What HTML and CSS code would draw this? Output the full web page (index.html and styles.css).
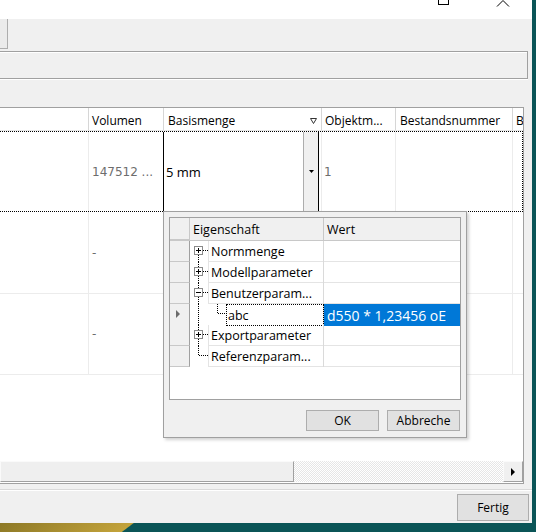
FILE: index.html
```html
<!DOCTYPE html>
<html lang="de">
<head>
    <meta charset="UTF-8">
    <title>Basismenge</title>
    <link rel="stylesheet" href="styles.css">
</head>
<body>
    <div class="window">
        <div class="titlebar">
            <svg class="cap-max" width="22" height="19"><rect x="6.5" y="-6.5" width="10" height="11" fill="none" stroke="#000"/></svg>
            <svg class="cap-close" width="22" height="19"><polyline points="5,6.5 11,0.5 17,6.5" fill="none" stroke="#000"/></svg>
        </div>
        <div class="toolbar"><div class="tool-btn"></div></div>
        <div class="panel"></div>

        <div class="grid-frame">
            <div class="grid-head">
                <div class="hcell c0"></div>
                <div class="hcell c1">Volumen</div>
                <div class="hcell c2">Basismenge
                    <svg class="filter" width="7" height="6"><polygon points="0.5,0.5 6.5,0.5 3.5,5.5" fill="none" stroke="#333"/></svg>
                </div>
                <div class="hcell c3">Objektm...</div>
                <div class="hcell c4">Bestandsnummer</div>
                <div class="hcell c5">B</div>
            </div>
            <div class="row row-focus">
                <div class="cell c0"></div>
                <div class="cell c1 muted">147512 ...</div>
                <div class="cell c2 edit">
                    <div class="editor">
                        <span>5 mm</span>
                        <div class="drop-btn"><svg width="5" height="3"><polygon points="0,0 5,0 2.5,3" fill="#000"/></svg></div>
                    </div>
                </div>
                <div class="cell c3 muted">1</div>
                <div class="cell c4"></div>
                <div class="cell c5"></div>
            </div>
            <div class="row row-b">
                <div class="cell c0"></div>
                <div class="cell c1 muted">-</div>
                <div class="cell c2"></div>
                <div class="cell c3"></div>
                <div class="cell c4"></div>
                <div class="cell c5"></div>
            </div>
            <div class="row row-c">
                <div class="cell c0"></div>
                <div class="cell c1 muted">-</div>
                <div class="cell c2"></div>
                <div class="cell c3"></div>
                <div class="cell c4"></div>
                <div class="cell c5"></div>
            </div>
            <div class="grid-fill"></div>
            <div class="hscroll">
                <div class="thumb"></div>
                <div class="track"></div>
                <div class="arrow"><svg width="4" height="8"><polygon points="0,0 4,4 0,8" fill="#000"/></svg></div>
            </div>
        </div>

        <div class="footer">
            <button class="btn fertig">Fertig</button>
        </div>

        <!-- dropdown of the Basismenge editor -->
        <div class="popup">
            <div class="pg">
                <div class="pg-head">
                    <div class="rh"></div>
                    <div class="ph name-h">Eigenschaft</div>
                    <div class="ph">Wert</div>
                </div>
                <div class="pg-row">
                    <div class="rh"></div>
                    <div class="name">
                        <svg width="18" height="21">
                            <line x1="8.5" y1="14" x2="8.5" y2="21" class="dot"/>
                            <line x1="13" y1="9.5" x2="18" y2="9.5" class="dot"/>
                            <rect x="4.5" y="5.5" width="8" height="8" class="box"/>
                            <line x1="6" y1="9.5" x2="11" y2="9.5" stroke="#000"/>
                            <line x1="8.5" y1="7" x2="8.5" y2="12" stroke="#000"/>
                        </svg>
                        <div class="label">Normmenge</div>
                    </div>
                    <div class="val"></div>
                </div>
                <div class="pg-row">
                    <div class="rh"></div>
                    <div class="name">
                        <svg width="18" height="21">
                            <line x1="8.5" y1="0" x2="8.5" y2="5" class="dot"/>
                            <line x1="8.5" y1="14" x2="8.5" y2="21" class="dot"/>
                            <line x1="13" y1="9.5" x2="18" y2="9.5" class="dot"/>
                            <rect x="4.5" y="5.5" width="8" height="8" class="box"/>
                            <line x1="6" y1="9.5" x2="11" y2="9.5" stroke="#000"/>
                            <line x1="8.5" y1="7" x2="8.5" y2="12" stroke="#000"/>
                        </svg>
                        <div class="label">Modellparameter</div>
                    </div>
                    <div class="val"></div>
                </div>
                <div class="pg-row">
                    <div class="rh"></div>
                    <div class="name">
                        <svg width="18" height="21">
                            <line x1="8.5" y1="0" x2="8.5" y2="5" class="dot"/>
                            <line x1="8.5" y1="14" x2="8.5" y2="21" class="dot"/>
                            <line x1="13" y1="9.5" x2="18" y2="9.5" class="dot"/>
                            <rect x="4.5" y="5.5" width="8" height="8" class="box"/>
                            <line x1="6" y1="9.5" x2="11" y2="9.5" stroke="#000"/>
                        </svg>
                        <div class="label">Benutzerparam...</div>
                    </div>
                    <div class="val"></div>
                </div>
                <div class="pg-row">
                    <div class="rh"><svg width="20" height="21"><polygon points="6,6 10,10 6,14" fill="#6b6b6b"/></svg></div>
                    <div class="name">
                        <svg width="36" height="21">
                            <line x1="8.5" y1="0" x2="8.5" y2="21" class="dot"/>
                            <line x1="27.5" y1="0" x2="27.5" y2="10" class="dot"/>
                            <line x1="28" y1="9.5" x2="36" y2="9.5" class="dot"/>
                        </svg>
                        <div class="label focus">abc</div>
                    </div>
                    <div class="val sel">d550 * 1,23456 oE</div>
                </div>
                <div class="pg-row">
                    <div class="rh"></div>
                    <div class="name">
                        <svg width="18" height="21">
                            <line x1="8.5" y1="0" x2="8.5" y2="5" class="dot"/>
                            <line x1="8.5" y1="14" x2="8.5" y2="21" class="dot"/>
                            <line x1="13" y1="9.5" x2="18" y2="9.5" class="dot"/>
                            <rect x="4.5" y="5.5" width="8" height="8" class="box"/>
                            <line x1="6" y1="9.5" x2="11" y2="9.5" stroke="#000"/>
                            <line x1="8.5" y1="7" x2="8.5" y2="12" stroke="#000"/>
                        </svg>
                        <div class="label">Exportparameter</div>
                    </div>
                    <div class="val"></div>
                </div>
                <div class="pg-row">
                    <div class="rh"></div>
                    <div class="name">
                        <svg width="18" height="21">
                            <line x1="8.5" y1="0" x2="8.5" y2="10" class="dot"/>
                            <line x1="9" y1="9.5" x2="18" y2="9.5" class="dot"/>
                        </svg>
                        <div class="label">Referenzparam...</div>
                    </div>
                    <div class="val"></div>
                </div>
            </div>
            <div class="popup-btns">
                <button class="btn">OK</button>
                <button class="btn">Abbreche</button>
            </div>
        </div>
    </div>
    <div class="desktop"></div>
</body>
</html>
```

FILE: styles.css
```css
* {
    box-sizing: border-box;
}

body {
    margin: 0;
    width: 536px;
    height: 532px;
    overflow: hidden;
    background-color: #0b5557;
    font-family: "Open Sans", "Noto Sans", sans-serif;
    color: #000;
}

.window {
    position: relative;
    width: 532px;
    height: 523px;
    background-color: #f0f0f0;
    display: flex;
    flex-direction: column;
}

.titlebar {
    height: 19px;
    flex: none;
    background-color: #fff;
    display: flex;
    justify-content: flex-end;
    padding-right: 18px;
}

.cap-max {
    margin-right: 38px;
}

.toolbar {
    height: 32px;
    flex: none;
}

.tool-btn {
    width: 8px;
    height: 30px;
    background-color: #ebebeb;
    border-right: 1px solid #adadad;
    border-bottom: 1px solid #adadad;
}

.panel {
    width: 528px;
    height: 28px;
    flex: none;
    border: 1px solid #a0a0a0;
    border-left: none;
    box-shadow: inset 0 1px 0 #fff, 0 1px 0 #fff;
}

/* main grid */
.grid-frame {
    margin-top: 28px;
    width: 524px;
    height: 377px;
    flex: none;
    background-color: #fff;
    border: 1px solid #a0a0a0;
    border-left: none;
    display: flex;
    flex-direction: column;
}

.grid-head,
.row {
    display: grid;
    grid-template-columns: 89px 75px 158px 74px 117px 1fr;
}

.grid-head {
    height: 23px;
    flex: none;
    font-size: 12px;
    border-bottom: 1px solid #e6e6e6;
}

.hcell {
    display: flex;
    align-items: center;
    padding-left: 3px;
    padding-top: 3px;
    white-space: nowrap;
    overflow: hidden;
    border-right: 1px solid #d6d6d6;
}

.hcell.c2 {
    padding-left: 4px;
    padding-right: 4px;
    justify-content: space-between;
}

.hcell.c4 {
    padding-left: 4px;
}

.hcell.c5,
.cell.c5 {
    border-right: none;
}

.row {
    flex: none;
    border-bottom: 1px solid #ececec;
}

.row-focus {
    height: 81px;
    border: 1px dotted #000;
    border-left: none;
}

.row-b {
    height: 82px;
}

.row-c {
    height: 81px;
}

.cell {
    display: flex;
    align-items: center;
    padding-left: 3px;
    font-size: 13px;
    border-right: 1px solid #ececec;
    white-space: nowrap;
}

.cell.c3 {
    padding-left: 2px;
}

.muted {
    font-family: "DejaVu Sans", sans-serif;
    font-size: 12px;
    color: #6d6d6d;
}

.cell.edit {
    padding-left: 0;
    align-items: stretch;
}

.editor {
    margin-left: -1px;
    width: 156px;
    display: flex;
    align-items: center;
    background-color: #fff;
    border-left: 1px solid #000;
    border-right: 1px solid #000;
}

.editor span {
    flex: 1;
    padding-left: 2px;
}

.drop-btn {
    width: 15px;
    align-self: stretch;
    display: flex;
    align-items: center;
    justify-content: center;
    background-color: #f0f0f0;
    border-left: 1px solid #adadad;
}

.grid-fill {
    flex: 1;
}

.hscroll {
    height: 21px;
    flex: none;
    margin-bottom: 1px;
    display: flex;
}

.thumb {
    width: 294px;
    background-color: #efefef;
    border: 1px solid;
    border-color: #fafafa #a0a0a0 #a0a0a0 #fafafa;
}

.track {
    flex: 1;
    background: repeating-conic-gradient(#fff 0 25%, #e6e6e6 0 50%) 0 0 / 2px 2px;
}

.arrow {
    width: 20px;
    display: flex;
    align-items: center;
    justify-content: center;
    background-color: #f0f0f0;
    border: 1px solid;
    border-color: #fafafa #a0a0a0 #a0a0a0 #fafafa;
}

/* bottom bar */
.footer {
    flex: 1;
    margin-top: 5px;
    border-top: 1px solid #d9d9d9;
    box-shadow: inset 0 1px 0 #fff;
    display: flex;
    justify-content: flex-end;
    align-items: flex-start;
    padding: 4px 3px 0 0;
}

.btn {
    font-family: "Open Sans", "Noto Sans", sans-serif;
    font-size: 12px;
    color: #000;
    background-color: #e1e1e1;
    border: 1px solid #adadad;
    padding: 0;
}

.fertig {
    width: 72px;
    height: 27px;
}

/* dropdown */
.popup {
    position: absolute;
    left: 163px;
    top: 211px;
    width: 304px;
    height: 227px;
    padding: 5px;
    background-color: #f0f0f0;
    border: 1px solid #a0a0a0;
    box-shadow: 2px 2px 3px rgba(0, 0, 0, 0.18);
    display: flex;
    flex-direction: column;
}

.pg {
    height: 183px;
    flex: none;
    background-color: #fff;
    border: 1px solid #a0a0a0;
}

.pg-head,
.pg-row {
    display: grid;
    grid-template-columns: 20px 134px 1fr;
}

.pg-head {
    height: 23px;
    background-color: #f0f0f0;
    border-bottom: 1px solid #c8c8c8;
    font-size: 12.5px;
}

.ph {
    display: flex;
    align-items: center;
    padding-left: 3px;
    padding-top: 1px;
}

.pg-head .rh,
.name-h {
    border-right: 1px solid #c8c8c8;
}

.pg-row {
    height: 21px;
}

.rh {
    background-color: #f0f0f0;
    border-right: 1px solid #a0a0a0;
    border-bottom: 1px solid #c8c8c8;
}

.rh svg {
    display: block;
}

.name {
    display: flex;
    border-right: 1px solid #dadada;
}

.name svg {
    flex: none;
    display: block;
}

.dot {
    stroke: #000;
    stroke-dasharray: 1 1;
}

.box {
    fill: #fff;
    stroke: #8a8a8a;
}

.label {
    flex: 1;
    display: flex;
    align-items: center;
    padding-left: 2px;
    font-size: 12.5px;
    white-space: nowrap;
    overflow: hidden;
    border-left: 1px solid #e4e4e4;
    border-bottom: 1px solid #e4e4e4;
}

.label.focus {
    border: 1px dotted #000;
    margin-right: -1px;
    padding-left: 1px;
}

.val {
    border-bottom: 1px solid #e4e4e4;
}

.val.sel {
    display: flex;
    align-items: center;
    padding-left: 3px;
    background-color: #0078d7;
    color: #fff;
    font-size: 14px;
    white-space: nowrap;
    overflow: hidden;
    border-bottom: none;
}

.popup-btns {
    display: flex;
    justify-content: flex-end;
    gap: 8px;
    margin-top: 10px;
    padding-right: 1px;
}

.popup-btns .btn {
    width: 73px;
    height: 21px;
}

.desktop {
    height: 9px;
    background: linear-gradient(143deg, #8c7826 0, #c3a33b 80px, #0b5557 81px);
}
```
